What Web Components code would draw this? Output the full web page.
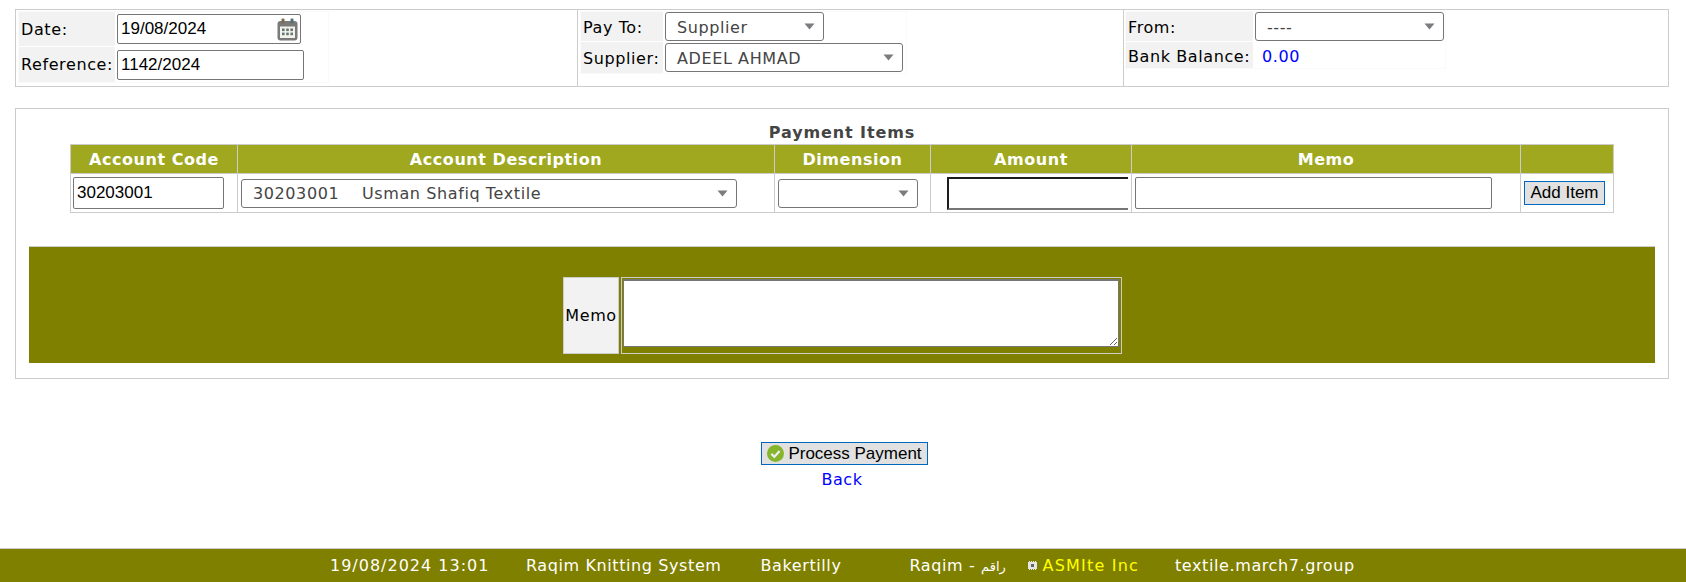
<!DOCTYPE html>
<html><head><meta charset="utf-8">
<style>
html,body{margin:0;padding:0;background:#fff;}
body{font-family:"DejaVu Sans",sans-serif;font-size:16px;letter-spacing:.6px;color:#000;width:1686px;height:582px;overflow:hidden;display:flex;flex-direction:column;}
</style></head><body>
<top-panel>
  <form-block style="--cols:96px 213px;--mw:309px;--rg:1px" slot="a">
    <cell-label style="--h:34px">Date:</cell-label>
    <cell-value><text-box value="19/08/2024" style="--w:184px;--h:30px" cal></text-box></cell-value>
    <cell-label style="--h:35px">Reference:</cell-label>
    <cell-value><text-box value="1142/2024" style="--w:187px;--h:30px"></text-box></cell-value>
  </form-block>
  <form-block style="--cols:82px 243px;--mw:325px;--rg:1px;--pt:2px" slot="b">
    <cell-label style="--h:29px">Pay To:</cell-label>
    <cell-value><fake-select style="--w:159px;--h:29px">Supplier</fake-select></cell-value>
    <cell-label style="--h:31px">Supplier:</cell-label>
    <cell-value><fake-select style="--w:238px;--h:29px">ADEEL AHMAD</fake-select></cell-value>
  </form-block>
  <form-block style="--cols:127px 192px;--mw:319px;--rg:1px;--pt:2px" slot="c">
    <cell-label style="--h:29px">From:</cell-label>
    <cell-value><fake-select style="--w:189px;--h:29px">----</fake-select></cell-value>
    <cell-label style="--h:26px">Bank Balance:</cell-label>
    <cell-value><span style="color:#00f;padding:2px 0 0 7px;">0.00</span></cell-value>
  </form-block>
</top-panel>
<items-panel>
  <items-table></items-table>
  <memo-band></memo-band>
</items-panel>
<action-area></action-area>
<status-bar></status-bar>
<script>
function def(name,css,html,init){
  customElements.define(name,class extends HTMLElement{
    constructor(){super();const r=this.attachShadow({mode:'open'});r.innerHTML='<style>'+css+'</style>'+html;if(init)init.call(this,r);}
    connectedCallback(){ if(this.ready)this.ready(this.shadowRoot); }
  });
}
const CAL='<svg viewBox="0 0 21 23" width="21" height="23" aria-hidden="true"><rect x="0.5" y="3" width="20" height="19.5" rx="3" fill="#7a7a7a"/><rect x="3" y="8.5" width="15" height="11.5" fill="#f4f3ea"/><rect x="4.5" y="0.5" width="3" height="5" rx="1" fill="#7a6a55"/><rect x="13.5" y="0.5" width="3" height="5" rx="1" fill="#55707a"/><g fill="#66757c"><rect x="5" y="10.5" width="2.6" height="2.6"/><rect x="9.2" y="10.5" width="2.6" height="2.6"/><rect x="13.4" y="10.5" width="2.6" height="2.6"/><rect x="5" y="14.6" width="2.6" height="2.6"/><rect x="9.2" y="14.6" width="2.6" height="2.6"/><rect x="13.4" y="14.6" width="2.6" height="2.6"/></g></svg>';

def('top-panel',
 ':host{display:grid;flex:none;grid-template-columns:561px 546px 1fr;height:76px;margin:9px 17px 0 15px;border:1px solid #ccc;box-sizing:content-box}'+
 '.c{padding-top:1px;box-sizing:border-box;min-width:0}.c+.c{border-left:1px solid #ccc}.a{padding-left:2px}.b{padding-left:2px}.c3{padding-left:1px}',
 '<div class="c a"><slot name="a"></slot></div><div class="c b"><slot name="b"></slot></div><div class="c c3"><slot name="c"></slot></div>');

def('form-block',
 ':host{display:grid;grid-template-columns:var(--cols);width:var(--mw);border:1px solid #fafafa;align-self:start;row-gap:var(--rg);box-sizing:content-box}',
 '<slot></slot>');
def('cell-label',
 ':host{display:flex;align-items:center;height:var(--h);background:#f2f2f2;padding:var(--pt,0) 0 0 2px;box-sizing:border-box;white-space:nowrap}',
 '<slot></slot>');
def('cell-value',
 ':host{display:flex;align-items:center;padding-left:2px;box-sizing:border-box;min-width:0}',
 '<slot></slot>');

def('text-box',
 ':host{display:flex;align-items:center;justify-content:space-between;width:var(--w);height:var(--h);box-sizing:border-box;border:1px solid #767676;border-radius:2px;background:#fff;font:17px "Liberation Sans",sans-serif;letter-spacing:0;padding:0 2px 0 3px;overflow:hidden;color:#000}'+
 ':host([focused]){border:none;border-top:2px solid #1c1c1c;border-left:2px solid #1c1c1c;border-bottom:2px solid #767676;border-radius:0}'+
 'svg{display:block;flex:none}',
 '<span id="t"></span><span id="i" style="display:flex"></span>',
 function(r){this.ready=(s)=>{s.getElementById('t').textContent=this.getAttribute('value')||'';if(this.hasAttribute('cal'))s.getElementById('i').innerHTML=CAL;};});

def('fake-select',
 ':host{display:flex;align-items:center;justify-content:space-between;width:var(--w);height:var(--h);box-sizing:border-box;border:1px solid #767676;border-radius:3px;background:#fff;color:#444;padding:0 8px 0 11px;white-space:pre;overflow:hidden;flex:none}'+
 'span{padding-top:var(--pt,0)}svg{display:block;flex:none}',
 '<span><slot></slot></span><svg width="11" height="7" viewBox="0 0 11 7" aria-hidden="true"><path d="M0.5 0.5h10L5.5 6.5z" fill="#7b7b80"/></svg>');

def('items-panel',
 ':host{display:flex;flex:none;flex-direction:column;height:269px;margin:21px 17px 0 15px;border:1px solid #ccc;box-sizing:content-box}',
 '<slot></slot>');

def('items-table',
 ':host{display:block;flex:none;margin:0 0 0 54px;width:1544px;height:137px;box-sizing:border-box}'+
 '.cap{height:35px;box-sizing:border-box;padding-top:14px;text-align:center;font-weight:bold;color:#444;line-height:20px;letter-spacing:.9px;white-space:nowrap}'+
 '.g{display:grid;grid-template-columns:166px 537px 156px 201px 389px 93px;border:1px solid #ccc;box-sizing:border-box;width:1544px;}'+
 '.h{background:#9fa81f;color:#fff;font-weight:bold;letter-spacing:.55px;height:28px;display:flex;align-items:center;justify-content:center;border-left:1px solid #ccc;box-sizing:border-box}'+
 '.h:first-child{border-left:none}'+
 '.d{height:39px;border-top:1px solid #ccc;border-left:1px solid #ccc;display:flex;align-items:center;box-sizing:border-box;min-width:0;overflow:hidden;padding-left:3px}'+
 '.amt{padding:0 3px 0 16px}.amt text-box{flex:none}'+
 'button{font:17px "Liberation Sans",sans-serif;letter-spacing:0;height:24px;width:81px;padding:0;background:#e1e1e1;border:1px solid #0067c0;color:#000;white-space:nowrap;border-radius:0;flex:none}',
 '<div class="cap">Payment Items</div><div class="g">'+
 '<div class="h">Account Code</div><div class="h">Account Description</div><div class="h">Dimension</div><div class="h">Amount</div><div class="h">Memo</div><div class="h"></div>'+
 '<div class="d" style="border-left:none;padding-left:2px"><text-box value="30203001" style="--w:151px;--h:32px"></text-box></div>'+
 '<div class="d"><fake-select style="--w:496px;--h:29px">30203001    Usman Shafiq Textile</fake-select></div>'+
 '<div class="d"><fake-select style="--w:140px;--h:29px"></fake-select></div>'+
 '<div class="d amt"><div style="width:100%;overflow:hidden;display:flex"><text-box focused style="--w:200px;--h:33px"></text-box></div></div>'+
 '<div class="d"><text-box style="--w:357px;--h:32px"></text-box></div>'+
 '<div class="d"><button>Add Item</button></div></div>');

def('memo-band',
 ':host{display:flex;flex:none;justify-content:center;align-items:flex-start;height:117px;margin:0 13px;background:#808000;border-top:1px solid #ccc;box-sizing:border-box;padding-top:30px}'+
 '.l{width:56px;height:77px;background:#f2f2f2;border:1px solid #ccc;box-sizing:border-box;display:flex;align-items:center;justify-content:center;padding-left:1px}'+
 '.v{width:501px;height:77px;margin-left:2px;border:1px solid #ccc;box-sizing:border-box;padding:1px}'+
 'textarea{display:block;width:496px;height:68px;box-sizing:border-box;border:1px solid #767676;border-top-width:2px;border-radius:0;margin:0;background:#fff;resize:both}'+
 '.w{display:flex}',
 '<div class="w"><div class="l">Memo</div><div class="v"><textarea aria-label="Memo"></textarea></div></div>');

def('action-area',
 ':host{display:flex;flex:none;flex-direction:column;align-items:center;height:169px;box-sizing:border-box;padding:63px 0 0 3px}'+
 'button{display:flex;align-items:center;justify-content:center;gap:4px;width:167px;height:23px;padding:0;background:#e1e1e1;border:1px solid #0067c0;font:17px "Liberation Sans",sans-serif;letter-spacing:0;color:#000;white-space:nowrap}'+
 'a{color:#00f;text-decoration:none;line-height:22px;margin:4px 0 0 -5px}svg{display:block;flex:none}',
 '<button><svg width="17" height="17" viewBox="0 0 17 17" aria-hidden="true"><circle cx="8.5" cy="8.5" r="8.5" fill="#85b52a"/><path d="M4.3 8.8l3 3 5.3-5.8" fill="none" stroke="#eee" stroke-width="2.2"/></svg>Process Payment</button><a href="#">Back</a>');

def('status-bar',
 ':host{display:flex;flex:none;align-items:center;height:34px;background:#808000;color:#fff;border-top:1px solid #ccc;box-sizing:border-box;white-space:nowrap;padding-left:330px}'+
 'span{flex:none}.y{color:#ff0;letter-spacing:1.2px}svg{display:block;flex:none}',
 '<span style="width:196px;letter-spacing:1px">19/08/2024 13:01</span><span style="width:234.5px">Raqim Knitting System</span><span style="width:149px">Bakertilly</span>'+
 '<span style="width:118px">Raqim - <span lang="ar" style="font-size:13px">راقم</span></span>'+
 '<svg width="9" height="9" viewBox="0 0 9 9" style="margin-right:6px" aria-hidden="true"><rect width="9" height="9" fill="#e6e6e6"/><path d="M0 0h1v1H0zM2 0h1v1H2zM4 0h1v1H4zM6 0h1v1H6zM8 0h1v1H8zM0 8h1v1H0zM2 8h1v1H2zM4 8h1v1H4zM6 8h1v1H6zM8 8h1v1H8z" fill="#808000"/><rect x="3" y="3" width="3" height="3" fill="#666"/></svg>'+
 '<span class="y" style="width:132.5px">ASMIte Inc</span><span>textile.march7.group</span>');
</script>
</body></html>
